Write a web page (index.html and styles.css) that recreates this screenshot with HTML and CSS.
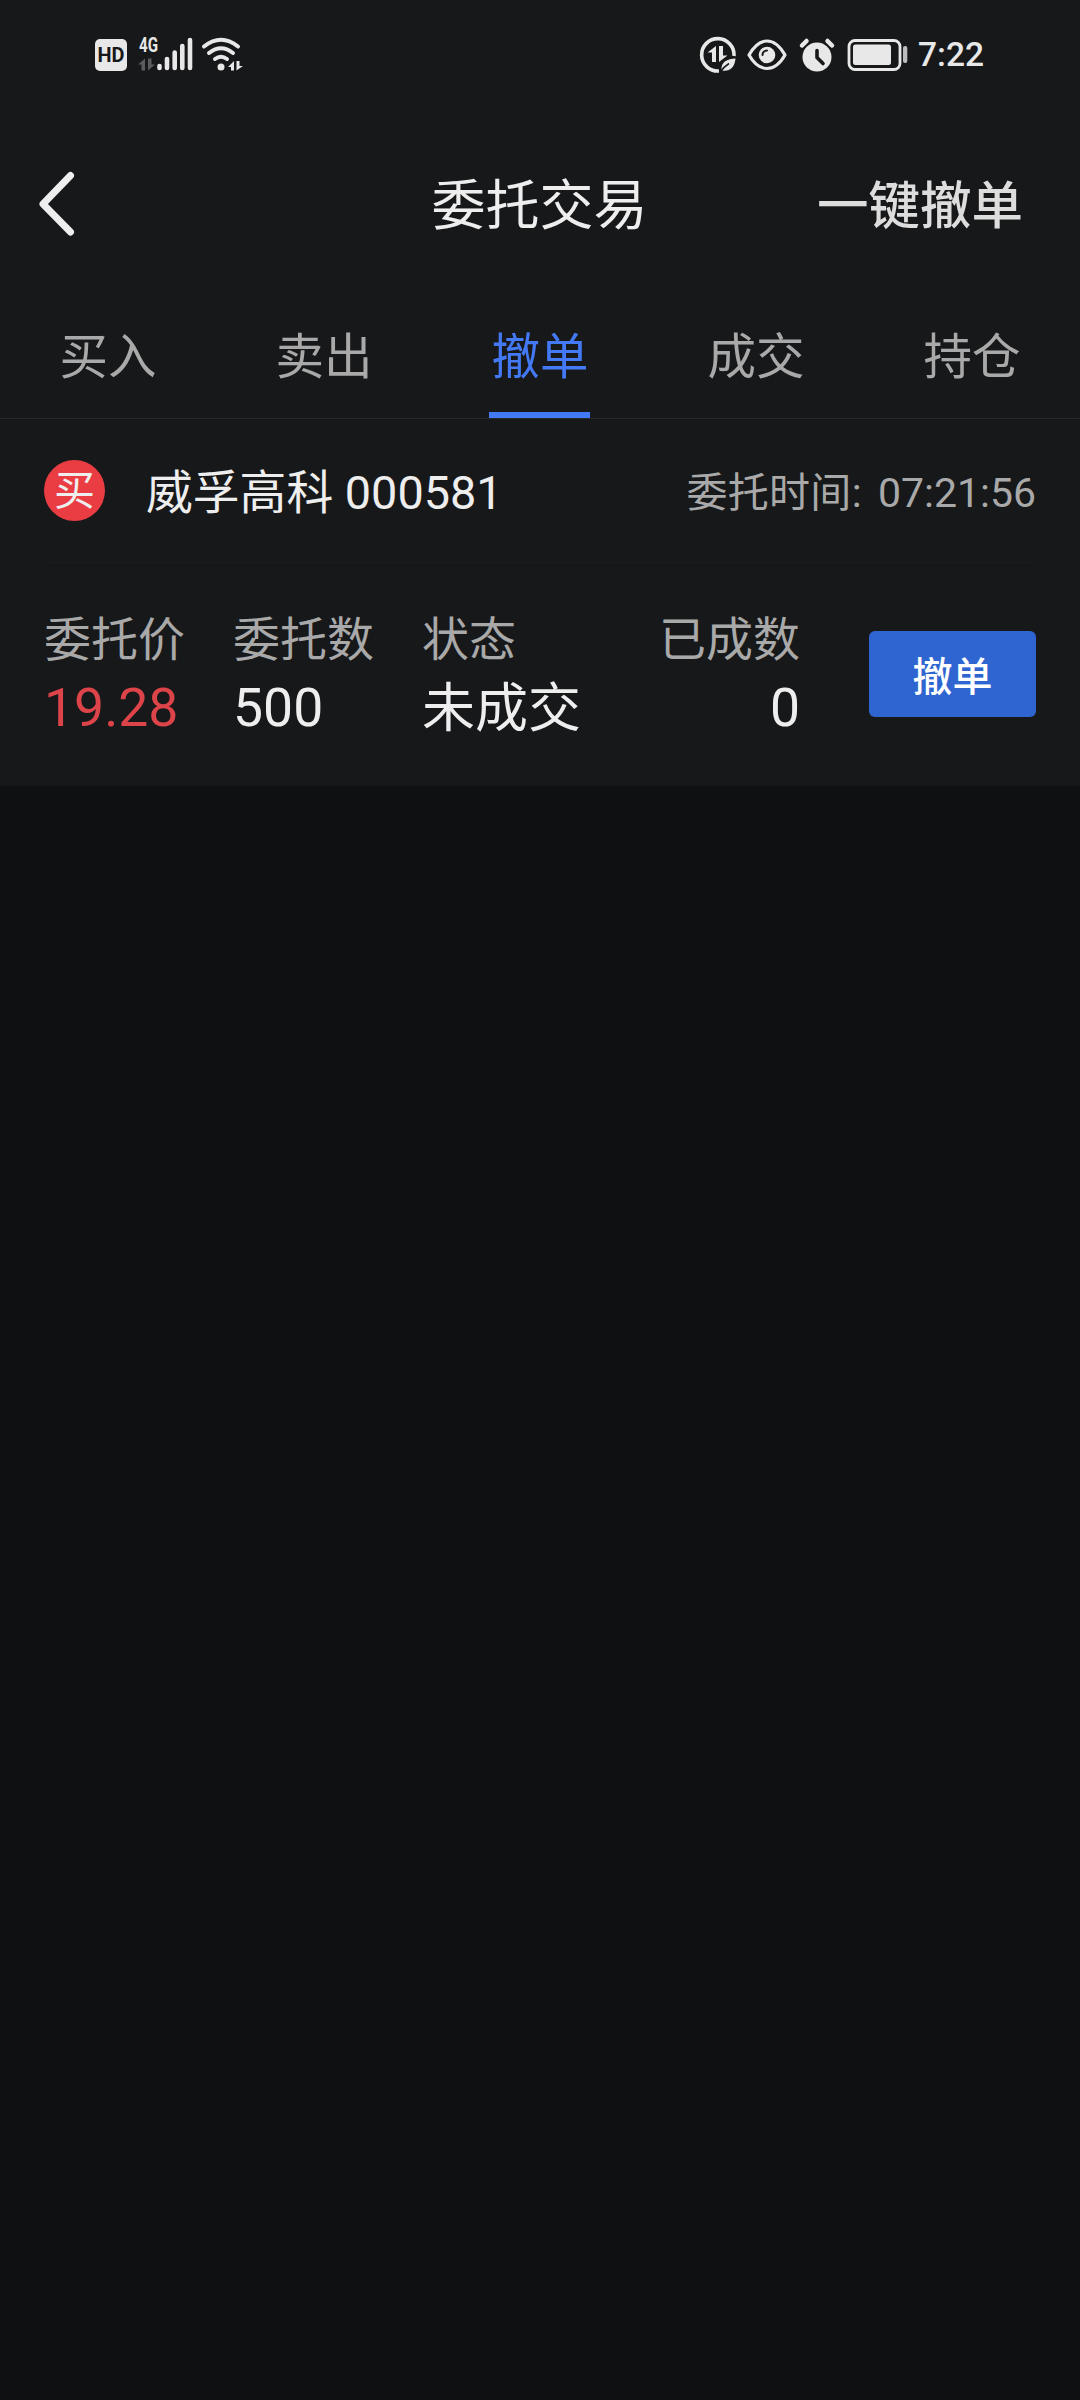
FILE: index.html
```html
<!DOCTYPE html>
<html lang="zh-CN">
  <head>
    <meta charset="UTF-8" />
    <meta name="viewport" content="width=device-width, initial-scale=1.0" />
    <title>委托交易</title>
    <link rel="stylesheet" href="styles.css">
  </head>
  <body>
    <div class="status-bar">
      <div class="status-group">
        <svg class="icon-hd" width="34" height="34" viewBox="0 0 34 34">
          <rect x="1" y="1" width="32" height="32" rx="5" fill="#e8e8e8" />
          <text x="17" y="24" text-anchor="middle" textLength="27" lengthAdjust="spacingAndGlyphs">HD</text>
        </svg>
        <svg class="icon-signal" width="56" height="36" viewBox="0 0 56 36">
          <text x="1" y="15" textLength="19" lengthAdjust="spacingAndGlyphs">4G</text>
          <path d="M7 21.500v12H3.500v-6H0zM10 33.500v-12h3.500v6H17z" fill="#5b5c5e" />
          <g stroke="#e8e8e8" stroke-width="4.600" stroke-linecap="round">
            <path d="M21.500 29v2M29 22v9M36.700 15.500v15.500M44.300 9v22M52 3v28" />
          </g>
        </svg>
        <svg class="icon-wifi" width="42" height="36" viewBox="0 0 42 36">
          <g fill="none" stroke="#e8e8e8" stroke-width="4" stroke-linecap="round">
            <path d="M3 9.500Q20 -4 37 9.500" />
            <path d="M8 16Q20 6.500 32 16" />
            <path d="M14 22Q20 17.500 26 22" />
          </g>
          <circle cx="20" cy="30" r="3.500" fill="#e8e8e8" />
          <path d="M33 24v9.500h-3V30H27zM35.500 33.500V24h3v5H42z" fill="#e8e8e8" />
        </svg>
      </div>
      <div class="status-group">
        <svg width="38" height="38" viewBox="0 0 38 38">
          <path d="M35 20A16.200 16.200 0 1 0 20 35" fill="none" stroke="#e8e8e8" stroke-width="3.600" />
          <path d="M17 10v16h-4v-9.500H8.500zM20 26V10h4v9.500h4.500z" fill="#e8e8e8" />
          <path d="M36.500 22.500c-8 .5-15 3-14 12 8 1.500 13-2.500 14-12z" fill="#e8e8e8" />
          <path d="M21 36.500q4-6 9-9" fill="none" stroke="#17181a" stroke-width="1.500" />
        </svg>
        <svg class="icon-eye" width="40" height="34" viewBox="0 0 40 34">
          <path d="M2 17C6 10 12 3 20 3s14 7 18 14c-4 7-10 13.500-18 13.500S6 24 2 17z" fill="none" stroke="#e8e8e8" stroke-width="3.200" stroke-linejoin="round" />
          <circle cx="20" cy="17" r="8.300" fill="#e8e8e8" />
          <path d="M15.500 17a4.500 4.500 0 0 1 4.500-4.500" fill="none" stroke="#17181a" stroke-width="2" stroke-linecap="round" />
        </svg>
        <svg class="icon-alarm" width="36" height="34" viewBox="0 0 36 34">
          <circle cx="18" cy="19" r="14.500" fill="#e8e8e8" />
          <path d="M3 7.500L7.500 3M33 7.500L28.500 3" stroke="#e8e8e8" stroke-width="4.500" stroke-linecap="round" />
          <path d="M18 12.500v7l6 6" fill="none" stroke="#17181a" stroke-width="3.600" stroke-linecap="round" stroke-linejoin="round" />
        </svg>
        <svg class="icon-battery" width="62" height="34" viewBox="0 0 62 34">
          <rect x="2" y="2.500" width="51" height="29" rx="6" fill="none" stroke="#e8e8e8" stroke-width="2.800" />
          <rect x="6" y="6.500" width="38" height="20.500" rx="2.500" fill="#e8e8e8" />
          <rect x="56" y="8" width="4.300" height="17" rx="2" fill="#bdbdbe" />
        </svg>
        <span class="clock">7:22</span>
      </div>
    </div>

    <div class="header">
      <a class="back" href="#" aria-label="返回">
        <svg width="38" height="66" viewBox="0 0 38 66">
          <path d="M32.500 4.500L5 33l27.500 28" fill="none" stroke="#eee" stroke-width="7" stroke-linecap="round" stroke-linejoin="round" />
        </svg>
      </a>
      <h1 class="title">委托交易</h1>
      <a class="cancel-all" href="#">一键撤单</a>
    </div>

    <div class="tabs">
      <a class="tab" href="#">买入</a>
      <a class="tab" href="#">卖出</a>
      <a class="tab active" href="#">撤单</a>
      <a class="tab" href="#">成交</a>
      <a class="tab" href="#">持仓</a>
    </div>

    <div class="order">
      <div class="order-head">
        <span class="badge">买</span>
        <span class="stock">威孚高科 000581</span>
        <span class="time"><span class="time-label">委托时间:</span>07:21:56</span>
      </div>
      <div class="order-body">
        <div class="fields">
          <div class="field">
            <div class="label">委托价</div>
            <div class="value price">19.28</div>
          </div>
          <div class="field">
            <div class="label">委托数</div>
            <div class="value">500</div>
          </div>
          <div class="field">
            <div class="label">状态</div>
            <div class="value status">未成交</div>
          </div>
          <div class="field right">
            <div class="label">已成数</div>
            <div class="value">0</div>
          </div>
        </div>
        <button class="cancel">撤单</button>
      </div>
    </div>
  </body>
</html>
```
FILE: styles.css
```css
* {
  box-sizing: border-box;
}
body {
  margin: 0;
  min-height: 2400px;
  background-color: #0f1012;
  color: #eee;
  font-family: Roboto, "Noto Sans CJK SC", sans-serif;
}
a {
  color: inherit;
  text-decoration: none;
}
svg {
  display: block;
  overflow: visible;
}
.status-bar {
  display: flex;
  justify-content: space-between;
  height: 108px;
  padding: 36px 96px 0 94px;
  background-color: #17181a;
}
.status-group {
  display: flex;
  align-items: center;
  height: 38px;
}
.icon-hd text {
  font-size: 20px;
  font-weight: 700;
  fill: #17181a;
}
.icon-signal {
  margin-left: 10px;
}
.icon-signal text {
  font-size: 20px;
  font-weight: 700;
  fill: #e8e8e8;
}
.icon-wifi {
  margin-left: 7px;
}
.icon-eye {
  margin-left: 10px;
}
.icon-alarm {
  margin-left: 12px;
}
.icon-battery {
  margin-left: 12px;
}
.clock {
  margin-left: 9px;
  font-size: 33.5px;
  font-weight: 500;
  line-height: 38px;
  color: #e8e8e8;
}
.header {
  display: grid;
  grid-template-columns: 1fr auto 1fr;
  align-items: center;
  height: 191px;
  padding: 0 57px 0 38px;
  background-color: #17181a;
}
.title {
  margin: 6px 0 0 18px;
  font-size: 54px;
  font-weight: 400;
  line-height: 64px;
}
.cancel-all {
  justify-self: end;
  margin-top: 6px;
  font-size: 51.500px;
  font-weight: 500;
  line-height: 64px;
  color: #ddd;
}
.tabs {
  display: flex;
  height: 120px;
  background-color: #17181a;
  border-bottom: 1px solid #27282a;
}
.tab {
  display: flex;
  flex: 1;
  flex-direction: column;
  align-items: center;
  justify-content: space-between;
  font-size: 48.500px;
  line-height: 117px;
  color: #a9a9a9;
}
.tab.active {
  color: #4379f5;
}
.tab.active::after {
  content: "";
  width: 101px;
  height: 6px;
  margin: -4px 1px 0 0;
  background-color: #4379f5;
}
.order {
  background-color: #17181a;
}
.order-head {
  display: flex;
  align-items: center;
  height: 144px;
  margin: 0 44px;
  border-bottom: 1px solid #1b1c1e;
}
.badge {
  width: 61px;
  height: 61px;
  border-radius: 50%;
  background-color: #ea3d43;
  font-size: 41px;
  line-height: 62px;
  text-align: center;
}
.stock {
  margin: 4px 0 0 41px;
  font-size: 46.800px;
  line-height: 60px;
}
.time {
  margin: 4px 0 0 auto;
  font-size: 41px;
  line-height: 60px;
  color: #a9a9a9;
}
.time-label {
  margin-right: 16px;
  letter-spacing: 0.3px;
}
.order-body {
  display: flex;
  align-items: center;
  justify-content: space-between;
  height: 223px;
  padding: 0 44px 2px;
}
.fields {
  display: grid;
  grid-template-columns: 189px 189px 188px 190px;
  margin-top: 6px;
}
.label {
  font-size: 47px;
  line-height: 65px;
  color: #a9a9a9;
}
.value {
  font-size: 53.500px;
  line-height: 71px;
}
.value.price {
  color: #dc4449;
}
.value.status {
  font-size: 53px;
  line-height: 75px;
}
.right {
  text-align: right;
}
.cancel {
  width: 167px;
  height: 86px;
  padding: 0;
  border: none;
  border-radius: 6px;
  background-color: #2f65d0;
  color: #fff;
  font-family: inherit;
  font-size: 40px;
  font-weight: 500;
}
```
